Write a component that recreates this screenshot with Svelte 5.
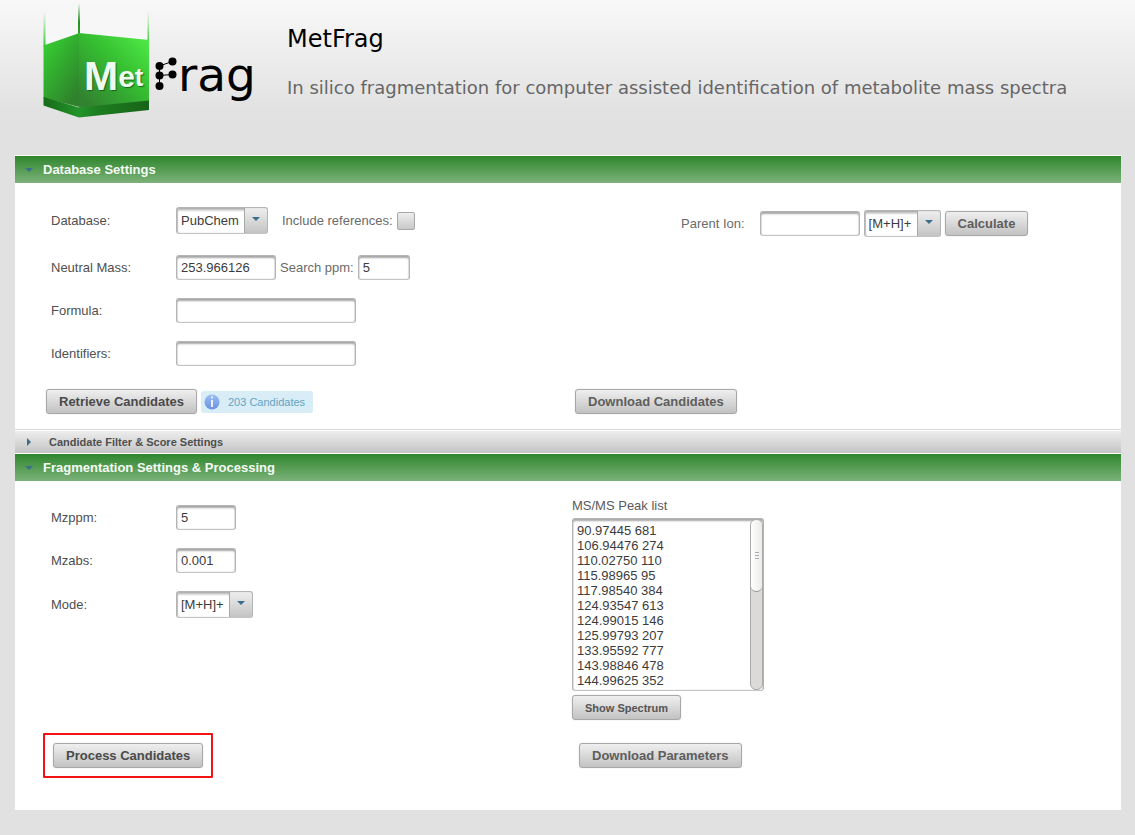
<script>
  let database = $state('PubChem');
  let includeReferences = $state(false);
  let neutralMass = $state('253.966126');
  let searchPpm = $state('5');
  let formula = $state('');
  let identifiers = $state('');
  let parentIon = $state('');
  let ionType = $state('[M+H]+');
  let mzppm = $state('5');
  let mzabs = $state('0.001');
  let mode = $state('[M+H]+');
  let peaks = $state(
    [
      '90.97445 681',
      '106.94476 274',
      '110.02750 110',
      '115.98965 95',
      '117.98540 384',
      '124.93547 613',
      '124.99015 146',
      '125.99793 207',
      '133.95592 777',
      '143.98846 478',
      '144.99625 352'
    ].join('\n')
  );
</script>

<header class="banner">
  <svg class="logo" width="216" height="120" viewBox="43 0 216 120" role="img" aria-label="MetFrag logo">
    <defs>
      <linearGradient id="left" x1="0" y1="0" x2="0.7" y2="1">
        <stop offset="0" stop-color="#3ad636" />
        <stop offset="0.45" stop-color="#32b02f" />
        <stop offset="1" stop-color="#2f812c" />
      </linearGradient>
      <linearGradient id="right" x1="0.9" y1="0" x2="0.1" y2="0.9">
        <stop offset="0" stop-color="#50ea47" />
        <stop offset="0.45" stop-color="#35bf31" />
        <stop offset="1" stop-color="#328330" />
      </linearGradient>
      <linearGradient id="base" x1="0" y1="0" x2="1" y2="0">
        <stop offset="0" stop-color="#176c18" />
        <stop offset="0.34" stop-color="#23942a" />
        <stop offset="0.5" stop-color="#1d7f20" />
        <stop offset="1" stop-color="#176318" />
      </linearGradient>
      <linearGradient id="pole" x1="0" y1="0" x2="0" y2="1">
        <stop offset="0" stop-color="#4ade45" stop-opacity="0" />
        <stop offset="1" stop-color="#31c42e" />
      </linearGradient>
      <linearGradient id="poleDark" x1="0" y1="0" x2="0" y2="1">
        <stop offset="0" stop-color="#2a9a28" stop-opacity="0" />
        <stop offset="0.6" stop-color="#249023" />
        <stop offset="1" stop-color="#2ca52a" />
      </linearGradient>
      <linearGradient id="glass" x1="0" y1="0" x2="0" y2="1">
        <stop offset="0" stop-color="#fff" stop-opacity="0" />
        <stop offset="1" stop-color="#fff" stop-opacity="0.6" />
      </linearGradient>
    </defs>
    <path d="M45 13 79 5l70 8v27L79 33 45 45z" fill="url(#glass)" />
    <rect x="43.5" y="11" width="2" height="36" fill="url(#pole)" />
    <rect x="78" y="3" width="2" height="32" fill="url(#poleDark)" />
    <rect x="147.5" y="11" width="1.5" height="32" fill="url(#pole)" />
    <path d="M43.5 45.5 79.5 33v74L43.5 98z" fill="url(#left)" />
    <path d="M79 33l70 7v62l-70 6z" fill="url(#right)" />
    <path d="M43.5 97 79 107.500l70-7V110l-70 7.500-35.500-12z" fill="url(#base)" />
    <text class="met" x="84" y="90" fill="#eefaee"><tspan font-size="41">M</tspan><tspan font-size="30" dy="-3">e</tspan><tspan font-size="26" dy="-1">t</tspan></text>
    <path d="M159.500 66 172 61.500M159.500 75.500 172 74.500M159.500 66v20" stroke="#000" stroke-width="1" fill="none" />
    <circle cx="159.500" cy="66" r="4" />
    <circle cx="172.500" cy="61.500" r="4" />
    <circle cx="159.500" cy="75.500" r="4" />
    <circle cx="172.500" cy="74.500" r="4" />
    <circle cx="159.500" cy="86" r="4" />
    <text class="rag" x="178" y="91" font-size="47">rag</text>
  </svg>
  <div class="titles">
    <h1>MetFrag</h1>
    <p>In silico fragmentation for computer assisted identification of metabolite mass spectra</p>
  </div>
</header>

<main class="accordion">
  <h2><button type="button" class="head open" aria-expanded="true"><svg width="8" height="4" viewBox="0 0 8 4" aria-hidden="true"><path d="M0 0h8L4 4z" /></svg>Database Settings</button></h2>
  <section class="body database">
    <div class="halves">
      <div class="form">
        <div class="row first">
          <label for="database">Database:</label>
          <div class="fields">
            <select id="database" class="w-database" bind:value={database}><option>PubChem</option></select>
            <label class="soft refs" for="refs">Include references:</label>
            <input id="refs" type="checkbox" bind:checked={includeReferences} />
          </div>
        </div>
        <div class="row">
          <label for="mass">Neutral Mass:</label>
          <div class="fields">
            <input id="mass" class="w-mass" type="text" bind:value={neutralMass} />
            <label class="soft" for="ppm">Search ppm:</label>
            <input id="ppm" class="w-ppm" type="text" bind:value={searchPpm} />
          </div>
        </div>
        <div class="row">
          <label for="formula">Formula:</label>
          <input id="formula" class="w-long" type="text" bind:value={formula} />
        </div>
        <div class="row">
          <label for="identifiers">Identifiers:</label>
          <input id="identifiers" class="w-long" type="text" bind:value={identifiers} />
        </div>
      </div>
      <div class="ion">
        <label class="soft" for="ion">Parent Ion:</label>
        <input id="ion" class="w-mass" type="text" bind:value={parentIon} />
        <select class="w-mode" aria-label="Ion type" bind:value={ionType}><option>[M+H]+</option></select>
        <button type="button" class="btn faded">Calculate</button>
      </div>
    </div>
    <div class="halves actions">
      <div class="fields start">
        <button type="button" class="btn">Retrieve Candidates</button>
        <div class="notice">
          <svg width="16" height="16" viewBox="0 0 16 16" aria-hidden="true">
            <defs>
              <linearGradient id="info" x1="0" y1="0" x2="0" y2="1">
                <stop offset="0" stop-color="#9dbdf2" />
                <stop offset="1" stop-color="#6a92e2" />
              </linearGradient>
            </defs>
            <circle cx="8" cy="8" r="7.500" fill="url(#info)" />
            <path d="M7 2.500h2v2H7zM7 6h2v7H7z" fill="#e8f1fc" />
          </svg>
          <span>203 Candidates</span>
        </div>
      </div>
      <div class="end"><button type="button" class="btn faded">Download Candidates</button></div>
    </div>
  </section>

  <h2><button type="button" class="head closed" aria-expanded="false"><svg width="4" height="8" viewBox="0 0 4 8" aria-hidden="true"><path d="M0 0v8l4-4z" /></svg>Candidate Filter &amp; Score Settings</button></h2>

  <h2><button type="button" class="head open" aria-expanded="true"><svg width="8" height="4" viewBox="0 0 8 4" aria-hidden="true"><path d="M0 0h8L4 4z" /></svg>Fragmentation Settings &amp; Processing</button></h2>
  <section class="body fragmentation">
    <div class="halves">
      <div class="form">
        <div class="row">
          <label for="mzppm">Mzppm:</label>
          <input id="mzppm" class="w-short" type="text" bind:value={mzppm} />
        </div>
        <div class="row">
          <label for="mzabs">Mzabs:</label>
          <input id="mzabs" class="w-short" type="text" bind:value={mzabs} />
        </div>
        <div class="row">
          <label for="mode">Mode:</label>
          <select id="mode" class="w-mode" bind:value={mode}><option>[M+H]+</option></select>
        </div>
      </div>
      <div class="peaks">
        <label for="peaks">MS/MS Peak list</label>
        <div class="listbox">
          <textarea id="peaks" bind:value={peaks}></textarea>
          <div class="track" aria-hidden="true"><div class="thumb"><i></i><i></i><i></i></div></div>
        </div>
        <button type="button" class="btn small">Show Spectrum</button>
      </div>
    </div>
    <div class="halves process">
      <div class="marked"><button type="button" class="btn">Process Candidates</button></div>
      <div class="end"><button type="button" class="btn faded">Download Parameters</button></div>
    </div>
  </section>
</main>

<style>
  :global(body) {
    background: linear-gradient(#f8f8f8, #e1e1e1 115px) no-repeat #e1e1e1;
    font-family: 'Liberation Sans', Arial, sans-serif;
    font-size: 13px;
    color: #4f4f4f;
  }
  * {
    box-sizing: border-box;
  }
  .banner {
    display: flex;
    gap: 28px;
    padding: 0 14px 35px 43px;
  }
  .logo {
    flex: none;
  }
  .met {
    font-family: 'Liberation Sans', Arial, sans-serif;
    font-weight: bold;
    text-shadow: 1px 1px 1px #17651a;
  }
  .rag {
    font-family: 'DejaVu Sans', sans-serif;
  }
  .titles {
    font-family: 'DejaVu Sans', Verdana, sans-serif;
    padding-top: 25px;
  }
  h1 {
    margin: 0;
    font-size: 24px;
    line-height: 28px;
    font-weight: normal;
    color: #000;
  }
  .titles p {
    margin: 24px 0 0;
    font-size: 18px;
    line-height: 22px;
    color: #666;
  }
  .accordion {
    margin: 0 14px 24px 15px;
    padding-top: 1px;
    background: #fff;
  }
  h2 {
    margin: 0;
  }
  .head {
    display: flex;
    align-items: center;
    width: 100%;
    border: 0;
    text-align: left;
    font-family: inherit;
    font-weight: bold;
  }
  .head svg {
    fill: #3a6f8c;
  }
  .open {
    gap: 10px;
    height: 27px;
    padding: 0 10px;
    font-size: 13px;
    color: #f4fbf4;
    background: linear-gradient(#2f862d, #7cb27a);
  }
  .closed {
    gap: 18px;
    height: 25px;
    padding: 0 12px;
    font-size: 11px;
    color: #4f4f4f;
    background: linear-gradient(#efefef, #c4c4c4);
    border-top: 1px solid #d9d9d9;
    border-bottom: 1px solid #fff;
    box-shadow: inset 0 1px #fff;
  }
  .halves {
    display: grid;
    grid-template-columns: 1fr 1fr;
  }
  .database {
    padding: 24px 0 15px;
  }
  .fragmentation {
    padding: 16px 0 32px;
  }
  .form {
    display: flex;
    flex-direction: column;
    gap: 18px;
    padding-left: 36px;
  }
  .fragmentation .form {
    padding-top: 8px;
  }
  .row {
    display: grid;
    grid-template-columns: 125px 1fr;
    align-items: center;
    justify-items: start;
  }
  .first {
    padding-bottom: 3px;
  }
  .fields {
    display: flex;
    align-items: center;
    gap: 4px;
  }
  .soft {
    color: #6a6a6a;
  }
  .refs {
    margin-left: 10px;
  }
  input,
  select,
  textarea {
    margin: 0;
    font: inherit;
    color: #3c3c3c;
    border: 1px solid #b4b4b4;
    border-bottom-color: #c4c4c4;
    border-radius: 3px;
    background: #fff;
    box-shadow: inset 0 2px 2px #a6a6a6, inset 0 0 1px #999;
  }
  input {
    height: 25px;
    padding: 0 4px;
  }
  input[type='checkbox'] {
    appearance: none;
    width: 18px;
    height: 18px;
    padding: 0;
    border-color: #a8a8a8;
    border-radius: 2px;
    background: linear-gradient(#eee, #c8c8c8);
    box-shadow: none;
  }
  select {
    appearance: none;
    height: 27px;
    padding: 0 26px 0 4px;
    background:
      url("data:image/svg+xml,%3Csvg xmlns='http://www.w3.org/2000/svg' width='8' height='4'%3E%3Cpath d='M0 0h8L4 4z' fill='%233a6f8c'/%3E%3C/svg%3E") right 7px top 9px no-repeat,
      linear-gradient(90deg, #a8a8a8 1px, transparent 1px) right 0 top 0 / 23px 100% no-repeat,
      linear-gradient(#eee, #c4c4c4) right 0 top 0 / 23px 100% no-repeat,
      linear-gradient(#a6a6a6, #fff 4px);
    box-shadow: inset 1px 0 1px #bbb;
  }
  .w-database {
    width: 92px;
  }
  .w-mass {
    width: 100px;
  }
  .w-ppm {
    width: 52px;
  }
  .w-long {
    width: 180px;
  }
  .w-short {
    width: 60px;
  }
  .w-mode {
    width: 77px;
  }
  .ion {
    display: flex;
    align-items: center;
    align-self: start;
    gap: 4px;
    padding: 3px 0 0 113px;
  }
  .ion label {
    margin-right: 11px;
  }
  .btn {
    height: 25px;
    padding: 0 12px;
    border: 1px solid #a8a8a8;
    border-radius: 3px;
    background: linear-gradient(#efefef, #c2c2c2);
    box-shadow: 0 0 1px #aaa;
    font-family: inherit;
    font-size: 13px;
    font-weight: bold;
    color: #4a4a4a;
    white-space: nowrap;
  }
  .faded {
    color: #5e5e5e;
  }
  .small {
    font-size: 11px;
    color: #555;
  }
  .actions {
    padding-top: 23px;
  }
  .start {
    padding-left: 31px;
  }
  .notice {
    display: flex;
    align-items: center;
    gap: 8px;
    height: 22px;
    padding: 0 8px 0 3px;
    border-radius: 3px;
    background: #d9edf7;
    font-size: 11px;
    color: #62a4c4;
  }
  .actions .end {
    padding-left: 7px;
  }
  .peaks {
    display: flex;
    flex-direction: column;
    align-items: flex-start;
    gap: 4px;
    padding-left: 4px;
  }
  .peaks label {
    line-height: 17px;
    color: #5a5a5a;
  }
  .listbox {
    position: relative;
    display: flex;
    width: 192px;
  }
  textarea {
    width: 100%;
    height: 173px;
    padding: 4px 16px 0 4px;
    line-height: 15px;
    resize: none;
    overflow: hidden;
  }
  .track {
    position: absolute;
    inset: 1px 1px 1px auto;
    width: 13px;
    border: 1px solid #aaa;
    border-radius: 6px;
    background: #dcdad8;
  }
  .thumb {
    display: flex;
    flex-direction: column;
    align-items: center;
    justify-content: center;
    gap: 2px;
    width: 100%;
    height: 72px;
    border-bottom: 1px solid #999;
    border-radius: 6px;
    background: linear-gradient(90deg, #fff, #ebebe9);
  }
  .thumb i {
    width: 4px;
    height: 1px;
    background: #aaa;
  }
  .process {
    align-items: center;
    padding-top: 13px;
  }
  .marked {
    justify-self: start;
    margin-left: 28px;
    padding: 8px;
    border: 2px solid #f21414;
    border-radius: 1px;
  }
  .process .end {
    padding-left: 11px;
  }
</style>
